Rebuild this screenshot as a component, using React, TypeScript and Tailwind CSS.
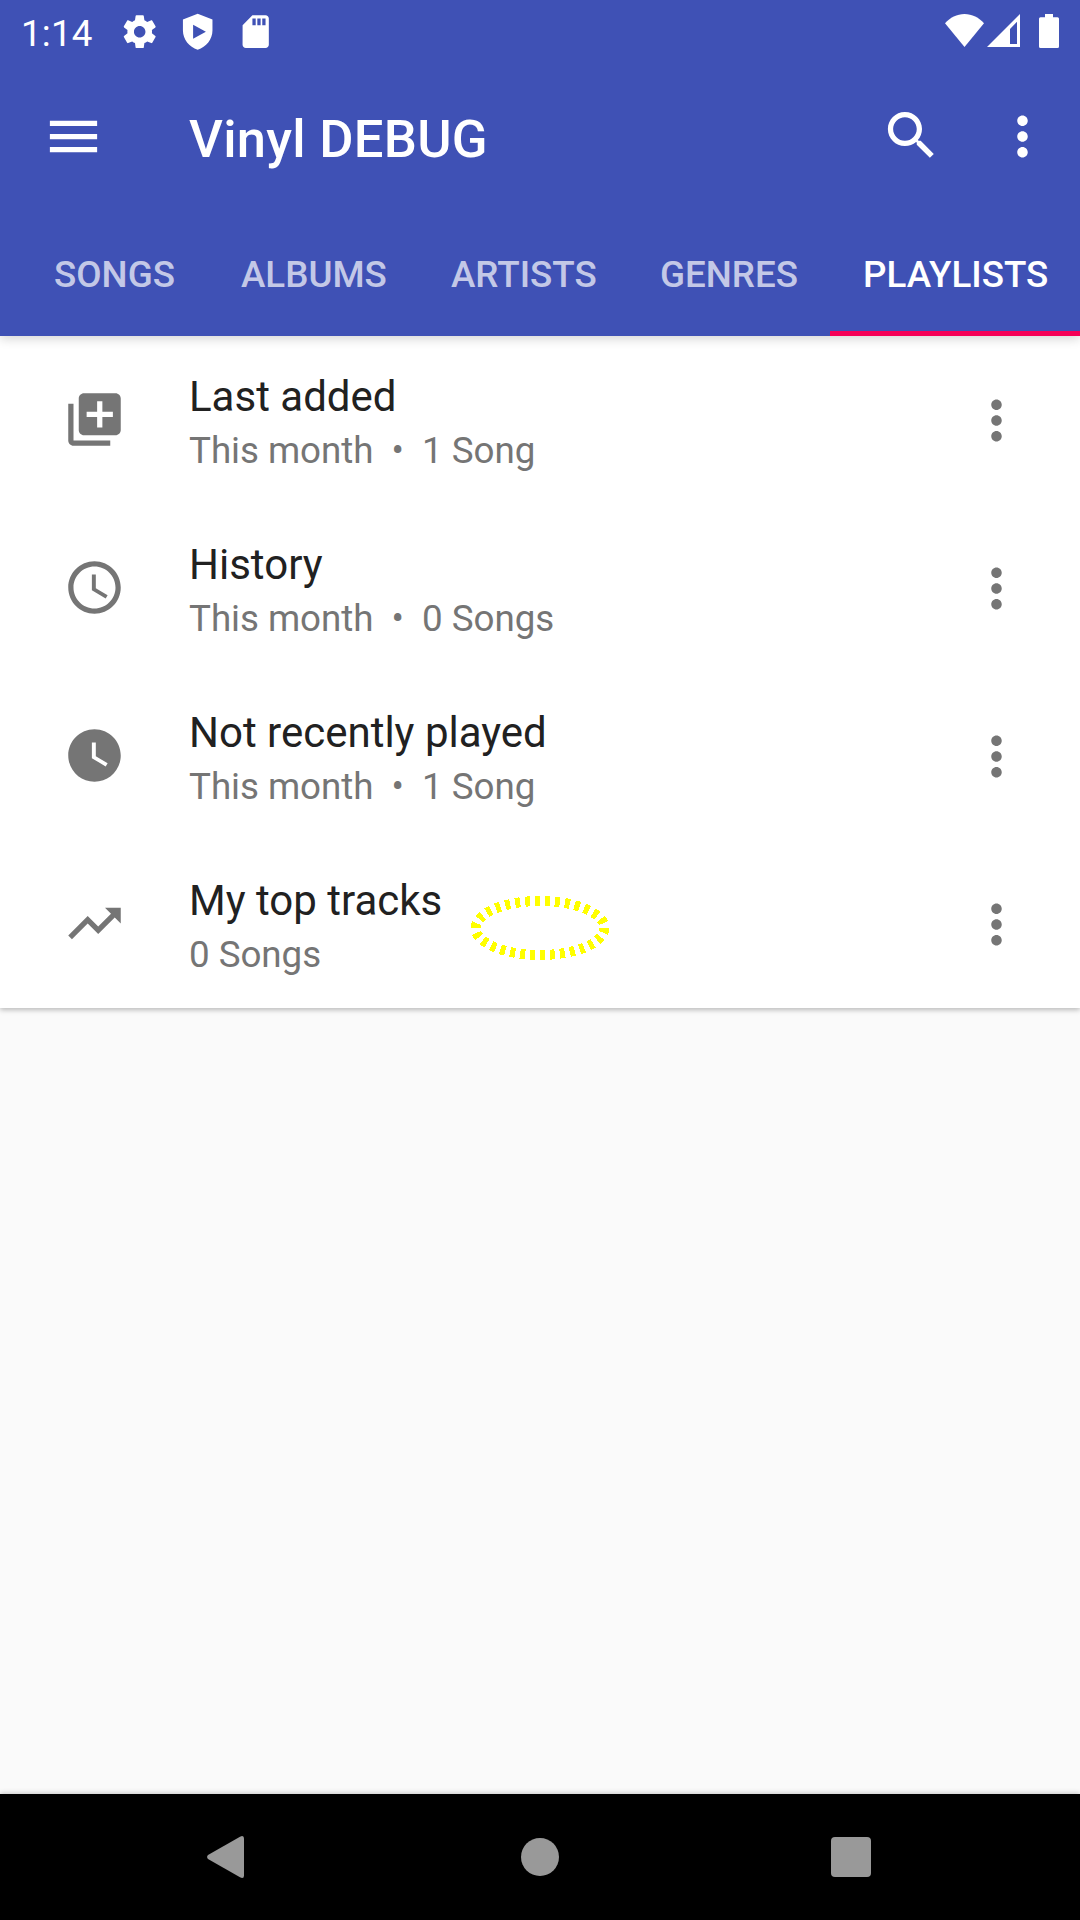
import React from "react";

type IconProps = { d: string; className?: string };

function Icon({ d, className = "" }: IconProps) {
  return (
    <svg viewBox="0 0 24 24" fill="currentColor" className={`shrink-0 ${className}`}>
      <path d={d} fillRule="evenodd" />
    </svg>
  );
}

const ICONS = {
  gear: "M19.43 12.98c.04-.32.07-.64.07-.98s-.03-.66-.07-.98l2.11-1.65c.19-.15.24-.42.12-.64l-2-3.46c-.12-.22-.39-.3-.61-.22l-2.49 1c-.52-.4-1.08-.73-1.69-.98l-.38-2.65C14.46 2.18 14.25 2 14 2h-4c-.25 0-.46.18-.49.42l-.38 2.65c-.61.25-1.17.59-1.69.98l-2.49-1c-.23-.09-.49 0-.61.22l-2 3.46c-.13.22-.07.49.12.64l2.11 1.65c-.04.32-.07.65-.07.98s.03.66.07.98l-2.11 1.65c-.19.15-.24.42-.12.64l2 3.46c.12.22.39.3.61.22l2.49-1c.52.4 1.08.73 1.69.98l.38 2.65c.03.24.24.42.49.42h4c.25 0 .46-.18.49-.42l.38-2.65c.61-.25 1.17-.59 1.69-.98l2.49 1c.23.09.49 0 .61-.22l2-3.46c.12-.22.07-.49-.12-.64l-2.11-1.65zM12 15.5c-1.93 0-3.5-1.57-3.5-3.5s1.57-3.5 3.5-3.5 3.5 1.57 3.5 3.5-1.57 3.5-3.5 3.5z",
  shield: "M12 1L3 4.6V11.2c0 5.4 3.8 10 9 11.8 5.2-1.8 9-6.4 9-11.8V4.6L12 1zM9.2 7.7L17 12 9.2 16.3z",
  sd: "M18 2h-8L4.02 8 4 20c0 1.1.9 2 2 2h12c1.1 0 2-.9 2-2V4c0-1.1-.9-2-2-2zm-6 6h-2V4h2v4zm3 0h-2V4h2v4zm3 0h-2V4h2v4z",
  menu: "M3 18h18v-2H3v2zm0-5h18v-2H3v2zm0-7v2h18V6H3z",
  search: "M15.5 14h-.79l-.28-.27C15.41 12.59 16 11.11 16 9.5 16 5.91 13.09 3 9.5 3S3 5.91 3 9.5 5.91 16 9.5 16c1.61 0 3.09-.59 4.23-1.57l.27.28v.79l5 4.99L20.49 19l-4.99-5zm-6 0C7.01 14 5 11.99 5 9.5S7.01 5 9.5 5 14 7.01 14 9.5 11.99 14 9.5 14z",
  more: "M12 8c1.1 0 2-.9 2-2s-.9-2-2-2-2 .9-2 2 .9 2 2 2zm0 2c-1.1 0-2 .9-2 2s.9 2 2 2 2-.9 2-2-.9-2-2-2zm0 6c-1.1 0-2 .9-2 2s.9 2 2 2 2-.9 2-2-.9-2-2-2z",
  libraryAdd: "M4 6H2v14c0 1.1.9 2 2 2h14v-2H4V6zm16-4H8c-1.1 0-2 .9-2 2v12c0 1.1.9 2 2 2h12c1.1 0 2-.9 2-2V4c0-1.1-.9-2-2-2zm-1 9h-4v4h-2v-4H9V9h4V5h2v4h4v2z",
  clock: "M11.99 2C6.47 2 2 6.48 2 12s4.47 10 9.99 10C17.52 22 22 17.52 22 12S17.52 2 11.99 2zM12 20c-4.42 0-8-3.58-8-8s3.58-8 8-8 8 3.58 8 8-3.58 8-8 8zM12.5 7H11v6l5.25 3.15.75-1.23-4.5-2.67z",
  clockFilled: "M11.99 2C6.47 2 2 6.48 2 12s4.47 10 9.99 10C17.52 22 22 17.52 22 12S17.52 2 11.99 2zM16.25 16.15L11 13V7h1.5v5.25l4.5 2.67-.75 1.23z",
  trending: "M16 6l2.29 2.29-4.88 4.88-4-4L2 16.59 3.41 18l6-6 4 4 6.3-6.29L22 12V6z",
};

const TABS = [
  { label: "SONGS", box: "w-[175px] pl-[54px]" },
  { label: "ALBUMS", box: "w-[210px] pl-[66px]" },
  { label: "ARTISTS", box: "w-[210px] pl-[66px]" },
  { label: "GENRES", box: "w-[235px] pl-[65px]" },
];

const ROWS = [
  { icon: ICONS.libraryAdd, title: "Last added", sub: "This month\u00a0\u00a0•\u00a0\u00a01 Song" },
  { icon: ICONS.clock, title: "History", sub: "This month\u00a0\u00a0•\u00a0\u00a00 Songs" },
  { icon: ICONS.clockFilled, title: "Not recently played", sub: "This month\u00a0\u00a0•\u00a0\u00a01 Song" },
  { icon: ICONS.trending, title: "My top tracks", sub: "0 Songs" },
];

function StatusBar() {
  return (
    <div className="flex h-[63px] items-start pl-[21px] pr-[21px]">
      <span className="mt-[12px] w-[99px] text-[36.75px] leading-[44px] tracking-[0.2px]">1:14</span>
      <Icon d={ICONS.gear} className="mt-[12px] size-[39.4px]" />
      <Icon d={ICONS.shield} className="mt-[12px] ml-[18.5px] size-[39.4px]" />
      <Icon d={ICONS.sd} className="mt-[12px] ml-[18.5px] size-[39.4px]" />
      <div className="flex-1" />
      <svg className="mt-[14px] h-[33px] w-[39px]" viewBox="0 0 39 33" fill="currentColor">
        <path d="M0 9.3C5 3.6 12 0 19.5 0S34 3.6 39 9.3L19.5 33z" />
      </svg>
      <svg className="mt-[14px] ml-[3px] h-[33px] w-[33px]" viewBox="0 0 33 33" fill="currentColor">
        <path fillRule="evenodd" d="M0 33L33 0V33zM23 15V30H30V7.8z" />
      </svg>
      <svg className="mt-[14px] ml-[19px] h-[34px] w-[20px]" viewBox="0 0 20 34" fill="currentColor">
        <path d="M6 0h8v3.3h4.5Q20 3.3 20 4.8V32.5Q20 34 18.5 34H1.5Q0 34 0 32.5V4.8Q0 3.3 1.5 3.3H6z" />
      </svg>
    </div>
  );
}

export default function App() {
  return (
    <div className="flex h-[1920px] w-[1080px] flex-col overflow-hidden bg-[#fafafa] font-['Roboto',sans-serif]">
      <header className="relative z-10 flex h-[336px] shrink-0 flex-col bg-[#3f51b5] text-white shadow-[0_3px_10px_rgba(0,0,0,0.16)]">
        <StatusBar />
        <div className="flex h-[147px] items-center pl-[42px] pr-[26px]">
          <Icon d={ICONS.menu} className="size-[63px]" />
          <h1 className="ml-[84px] mt-[4px] flex-1 text-[52.5px] leading-[62px] font-medium tracking-[0.27px]">Vinyl DEBUG</h1>
          <Icon d={ICONS.search} className="mb-[2px] size-[63px]" />
          <Icon d={ICONS.more} className="ml-[48px] size-[63px]" />
        </div>
        <nav className="flex h-[126px] text-[36.75px] font-medium leading-[44px] whitespace-nowrap">
          {TABS.map((t) => (
            <div key={t.label} className={`shrink-0 pt-[43px] text-white/70 ${t.box}`}>
              {t.label}
            </div>
          ))}
          <div className="w-[250px] shrink-0 border-b-[5px] border-[#f50057] pt-[43px] pl-[33px]">PLAYLISTS</div>
        </nav>
      </header>

      <main className="relative flex-1">
        <div className="bg-white shadow-[0_2px_5px_rgba(0,0,0,0.26)]">
          {ROWS.map((r) => (
            <div key={r.title} className="flex h-[168px] items-center pl-[63px] pr-[52px]">
              <Icon d={r.icon} className="mb-[2px] size-[63px] text-[#757575]" />
              <div className="ml-[63px] flex-1 pt-[4px] whitespace-nowrap">
                <div className="text-[42px] leading-[50px] text-[#212121]">{r.title}</div>
                <div className="mt-[7px] text-[36.75px] leading-[44px] tracking-[-0.05px] text-[#757575]">{r.sub}</div>
              </div>
              <Icon d={ICONS.more} className="size-[63px] text-[#757575]" />
            </div>
          ))}
        </div>
        <svg
          className="absolute left-[470px] top-[560px] h-[64px] w-[140px]"
          viewBox="0 0 140 64"
          fill="none"
          stroke="#ffff00"
          strokeWidth="10"
          strokeDasharray="5 5"
          shapeRendering="crispEdges"
        >
          <ellipse cx="70" cy="32" rx="64.5" ry="27" pathLength="300" />
        </svg>
      </main>

      <footer className="flex h-[126px] shrink-0 items-center bg-black pl-[207px] pr-[209px] text-[#999999] shadow-[0_-1px_5px_rgba(0,0,0,0.2)]">
        <svg className="h-[42px] w-[37px]" viewBox="0 0 37 42" fill="currentColor">
          <path d="M1 19L33 .7Q37-1.2 37 2.6V39.4Q37 43.2 33 41.3L1 23Q-.8 21 1 19z" />
        </svg>
        <div className="ml-[277px] size-[38px] rounded-full bg-[#999999]" />
        <div className="ml-[272px] size-[40px] rounded-[4px] bg-[#999999]" />
      </footer>
    </div>
  );
}
